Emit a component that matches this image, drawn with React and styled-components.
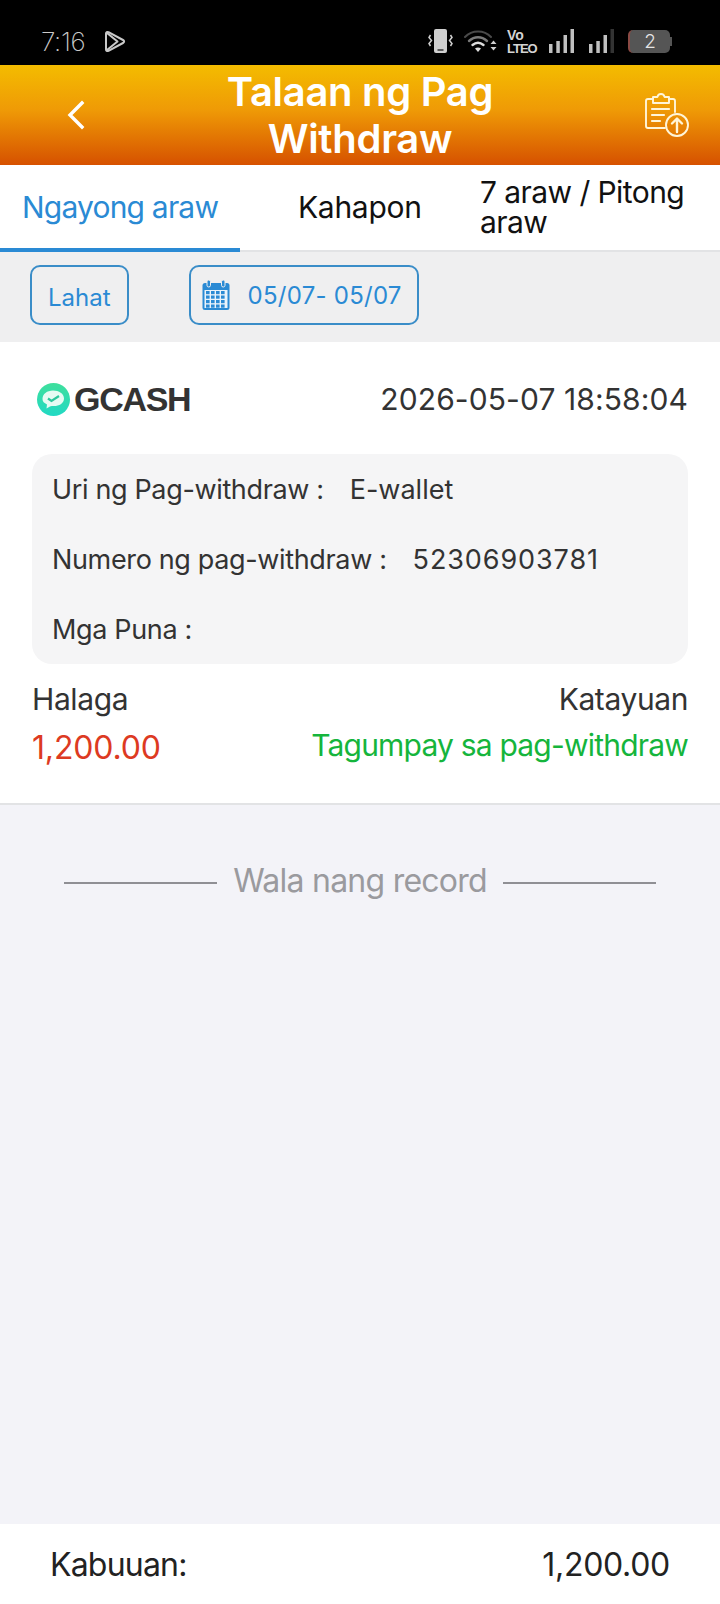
import React from "react";
import styled, { createGlobalStyle } from "styled-components";

const Global = createGlobalStyle`
  html, body { margin: 0; padding: 0; }
  body { font-family: Inter, "Liberation Sans", sans-serif; background: #f3f3f8; }
  * { box-sizing: border-box; }
`;

const Page = styled.div`
  width: 720px;
  height: 1604px;
  display: flex;
  flex-direction: column;
  background: #f3f3f8;
`;

const StatusBar = styled.div`
  height: 65px;
  background: #000;
  display: flex;
  align-items: center;
  padding: 17px 0 0 41px;
  color: #c9c9c9;
`;

const Time = styled.span`
  font-size: 26px;
  font-weight: 200;
  letter-spacing: -0.4px;
  width: 63px;
`;

const StatusIcons = styled.div`
  margin-left: auto;
  display: flex;
  align-items: center;
  margin-right: 48px;
`;

const Slot = styled.span`
  display: flex;
  margin-left: ${(p) => p.$ml}px;
`;

const Volte = styled.div`
  display: flex;
  flex-direction: column;
  align-items: flex-start;
  width: 31px;
  font-family: "Liberation Sans", sans-serif;
  font-weight: 700;
  color: #d4d4d4;
  span:first-child { font-size: 14px; line-height: 14px; }
  span:last-child { font-size: 13px; line-height: 13px; letter-spacing: -1px; }
`;

const Battery = styled.div`
  width: 42px;
  height: 23px;
  margin-left: 14px;
  margin-right: 2px;
  border-radius: 5px;
  border-left: 2px solid #8a4a44;
  background: #555;
  color: #e4e4e4;
  font-size: 19px;
  font-weight: 300;
  display: flex;
  align-items: center;
  justify-content: center;
  position: relative;
  &::after {
    content: "";
    position: absolute;
    right: -2px;
    top: 7px;
    width: 2px;
    height: 9px;
    background: #555;
  }
`;

const Header = styled.header`
  height: 100px;
  background: linear-gradient(180deg, #f4bc00 0%, #ef9a06 45%, #d65100 100%);
  display: flex;
  align-items: center;
`;

const HeaderSide = styled.div`
  width: 210px;
  flex: none;
  display: flex;
  justify-content: ${(p) => (p.$end ? "flex-end" : "flex-start")};
  padding: ${(p) => (p.$end ? "0 30px 0 0" : "0 0 0 65px")};
`;

const Title = styled.h1`
  margin: -1px 0 0;
  width: 300px;
  flex: none;
  text-align: center;
  color: #fff;
  font-size: 40px;
  line-height: 47px;
  font-weight: 600;
  letter-spacing: -0.3px;
`;

const Tabs = styled.nav`
  height: 87px;
  background: #fff;
  display: flex;
  border-bottom: 2px solid #e2e3e5;
`;

const Tab = styled.div`
  width: ${(p) => p.$w}px;
  height: 87px;
  flex: none;
  display: flex;
  align-items: center;
  padding-left: ${(p) => p.$pad}px;
  color: ${(p) => (p.$active ? "#2a8ad4" : "#111")};
  border-bottom: 4px solid ${(p) => (p.$active ? "#2a8ad4" : "transparent")};
  font-size: 30px;
  line-height: 30px;
  font-weight: 400;
  letter-spacing: ${(p) => p.$track}px;
`;

const Filters = styled.div`
  height: 90px;
  background: #efeff0;
  display: flex;
  align-items: flex-start;
  padding: 13px 0 0 30px;
  gap: 60px;
`;

const FilterButton = styled.div`
  height: 60px;
  border: 2px solid #3a8dc8;
  border-radius: 10px;
  display: flex;
  align-items: center;
  color: #2a8ad4;
  font-size: 24px;
  padding: ${(p) => p.$drop}px ${(p) => p.$right}px 0 ${(p) => p.$left}px;
  gap: 18px;
  letter-spacing: ${(p) => p.$track}px;
`;

const Card = styled.section`
  background: #fff;
  height: 463px;
  border-bottom: 2px solid #e2e3e5;
  padding: 0 32px;
`;

const CardHead = styled.div`
  height: 112px;
  padding-top: 2px;
  display: flex;
  align-items: center;
  justify-content: space-between;
`;

const Brand = styled.div`
  display: flex;
  align-items: center;
  gap: 4px;
  padding-left: 5px;
  color: #333;
  font-family: "Liberation Sans", sans-serif;
  font-size: 34px;
  font-weight: 700;
  letter-spacing: -1.3px;
`;

const Stamp = styled.span`
  font-size: 30px;
  font-weight: 400;
  color: #333;
  letter-spacing: 0.1px;
`;

const Details = styled.div`
  background: #f5f5f6;
  border-radius: 20px;
  height: 210px;
  padding: 0 20px;
  display: flex;
  flex-direction: column;
  justify-content: space-around;
`;

const DetailRow = styled.div`
  display: flex;
  color: #333;
  font-size: 27px;
`;

const DetailLabel = styled.span`
  margin-right: ${(p) => p.$gap}px;
  letter-spacing: -0.35px;
`;

const DetailValue = styled.span`
  letter-spacing: ${(p) => p.$track}px;
`;

const Summary = styled.div`
  display: flex;
  justify-content: space-between;
  padding-top: 17px;
`;

const Column = styled.div`
  display: flex;
  flex-direction: column;
  gap: 9px;
  align-items: ${(p) => (p.$end ? "flex-end" : "flex-start")};
`;

const SummaryLabel = styled.span`
  font-size: 30px;
  line-height: 36px;
  color: #333;
  letter-spacing: -0.4px;
`;

const Amount = styled.span`
  margin-top: 3px;
  font-size: 32px;
  line-height: 38px;
  color: #dd3a22;
  letter-spacing: -0.15px;
`;

const StatusText = styled.span`
  font-size: 30px;
  line-height: 38px;
  color: #15b53c;
  letter-spacing: -0.8px;
`;

const End = styled.div`
  flex: 1;
  display: flex;
  align-items: flex-start;
  justify-content: center;
  gap: 16px;
  margin-top: 56px;
  color: #9a9a9e;
  font-size: 32px;
  line-height: 40px;
  letter-spacing: -0.75px;
`;

const Rule = styled.span`
  width: 153px;
  height: 2px;
  background: #8f8f94;
  margin-top: 21px;
`;

const Footer = styled.footer`
  height: 80px;
  background: #fff;
  display: flex;
  align-items: center;
  justify-content: space-between;
  padding: 0 50px;
  color: #222;
  font-size: 32px;
  letter-spacing: -0.3px;
`;

const FooterLabel = styled.span`
  letter-spacing: -0.8px;
`;

const PlayIcon = () => (
  <svg width="22" height="23" viewBox="0 0 22 23" fill="none" stroke="#c9c9c9" strokeWidth="2" strokeLinejoin="round">
    <path d="M2 3.500c0-1.500 1-2 2.500-1.300l14.500 7.800c1.500.800 1.500 2.200 0 3L4.500 20.800C3 21.500 2 21 2 19.500Z" />
    <path d="M3 3l10.500 8.500L3 20" />
  </svg>
);

const VibrateIcon = () => (
  <svg width="25" height="24" viewBox="0 0 25 24" fill="none">
    <rect x="6" y="0" width="13" height="24" rx="2" fill="#cfcfcf" />
    <path d="M9.500 21h6" stroke="#333" strokeWidth="1.500" />
    <path d="M2.500 6 1 8.500l2.500 3-2.500 3 1.500 2.500M22.500 6 24 8.500l-2.500 3 2.500 3-1.500 2.500" stroke="#cfcfcf" strokeWidth="1.500" />
  </svg>
);

const WifiIcon = () => (
  <svg width="33" height="24" viewBox="0 0 33 24" fill="none" strokeLinecap="round">
    <path d="M1 8C8 .5 20 .5 27 8" stroke="#4a4a4a" strokeWidth="2" />
    <path d="M5 12c5.500-5 12.500-5 18 0" stroke="#7a7a7a" strokeWidth="2.400" />
    <path d="M8.500 16c3.500-3 7.500-3 11 0" stroke="#dcdcdc" strokeWidth="2.400" />
    <path d="M11 19.500 14 23l3-3.500c-1.800-1.200-4.200-1.200-6 0Z" fill="#dcdcdc" />
    <path d="M26.500 15l3-3.500 3 3.500ZM26.500 18l3 3.500 3-3.500Z" fill="#cfcfcf" />
  </svg>
);

const SignalIcon = ({ dim }) => (
  <svg width="25" height="24" viewBox="0 0 25 24">
    <rect x="0" y="15" width="3.500" height="9" fill="#c0c0c0" />
    <rect x="7.300" y="12" width="3.500" height="12" fill="#c0c0c0" />
    <rect x="14.500" y="6" width="3.500" height="18" fill="#c0c0c0" />
    <rect x="21.500" y="0" width="3.500" height="24" fill={dim ? "#333" : "#c0c0c0"} />
  </svg>
);

const BackIcon = () => (
  <svg width="22" height="32" viewBox="0 0 22 32" fill="none" stroke="#fff" strokeWidth="3.400" strokeLinecap="square">
    <path d="M17 4 5 16l12 12" />
  </svg>
);

const ClipIcon = () => (
  <svg width="46" height="46" viewBox="0 0 46 46" fill="none" stroke="#fff5d8" strokeWidth="1.900" strokeLinecap="round" strokeLinejoin="round">
    <path d="M21 36H4a2 2 0 0 1-2-2V9a2 2 0 0 1 2-2h5M25 7h4a2 2 0 0 1 2 2v11" />
    <path d="M9 5h4.500c.500-4 6.500-4 7 0H25v6H9Z" />
    <path d="M8 17h17M8 23h12M8 29h8" strokeWidth="2.200" />
    <circle cx="33" cy="33" r="11" />
    <path d="M33 40V27M28 31.500l5-5 5 5" strokeWidth="2.400" />
  </svg>
);

const CalendarIcon = () => (
  <svg width="28" height="30" viewBox="0 0 28 30">
    <rect x="0.500" y="3" width="27" height="27" rx="2.500" fill="#2a8ad4" />
    <rect x="2.500" y="10" width="23" height="18" fill="#eaf3fb" />
    <rect x="5" y="0" width="3.500" height="7" rx="1.700" fill="#2a8ad4" stroke="#efeff0" />
    <rect x="19.500" y="0" width="3.500" height="7" rx="1.700" fill="#2a8ad4" stroke="#efeff0" />
    {[11.500, 16, 20.500, 25].flatMap((y) =>
      [4, 9, 14, 19].map((x) => <rect key={`${x}-${y}`} x={x} y={y - 0.500} width="3.600" height="3.200" fill="#2a8ad4" />)
    )}
  </svg>
);

const GcashIcon = () => (
  <svg width="33" height="33" viewBox="0 0 33 33">
    <defs>
      <linearGradient id="g" x1="0" y1="0" x2="0" y2="1">
        <stop offset="0" stopColor="#3fdf9c" />
        <stop offset="1" stopColor="#21d9c4" />
      </linearGradient>
    </defs>
    <circle cx="16.500" cy="16.500" r="16.500" fill="url(#g)" />
    <path d="M5.500 16c0-5 4.500-8.500 10.500-8.500S27 10.500 27 15.500 22 23 17 23c-1.500 0-3 0-4.500 .800l-3 1.700.500-4C7 20 5.500 18.500 5.500 16Z" fill="#e6fbf3" />
    <path d="M11 15.500l3.500 2.500 7.500-5" fill="none" stroke="#2cc79c" strokeWidth="2.200" />
  </svg>
);

export default function App() {
  return (
    <Page>
      <Global />
      <StatusBar>
        <Time>7:16</Time>
        <PlayIcon />
        <StatusIcons>
          <VibrateIcon />
          <Slot $ml={11}><WifiIcon /></Slot>
          <Slot $ml={10}>
            <Volte>
              <span>Vo</span>
              <span>LTEO</span>
            </Volte>
          </Slot>
          <Slot $ml={11}><SignalIcon /></Slot>
          <Slot $ml={15}><SignalIcon dim /></Slot>
          <Battery>2</Battery>
        </StatusIcons>
      </StatusBar>
      <Header>
        <HeaderSide><BackIcon /></HeaderSide>
        <Title>Talaan ng Pag Withdraw</Title>
        <HeaderSide $end><ClipIcon /></HeaderSide>
      </Header>
      <Tabs>
        <Tab $w={240} $pad={22} $track={-0.8} $active>Ngayong araw</Tab>
        <Tab $w={240} $pad={58} $track={-0.3}>Kahapon</Tab>
        <Tab $w={240} $pad={0} $track={-0.57}>7 araw / Pitong araw</Tab>
      </Tabs>
      <Filters>
        <FilterButton $left={16} $right={16} $drop={5} $track={0}>Lahat</FilterButton>
        <FilterButton $left={11} $right={15} $drop={0} $track={0.25}>
          <CalendarIcon />
          05/07- 05/07
        </FilterButton>
      </Filters>
      <Card>
        <CardHead>
          <Brand>
            <GcashIcon />
            GCASH
          </Brand>
          <Stamp>2026-05-07 18:58:04</Stamp>
        </CardHead>
        <Details>
          <DetailRow>
            <DetailLabel $gap={26}>Uri ng Pag-withdraw :</DetailLabel>
            <DetailValue $track={0}>E-wallet</DetailValue>
          </DetailRow>
          <DetailRow>
            <DetailLabel $gap={26}>Numero ng pag-withdraw :</DetailLabel>
            <DetailValue $track={0.9}>52306903781</DetailValue>
          </DetailRow>
          <DetailRow>
            <DetailLabel $gap={0}>Mga Puna :</DetailLabel>
          </DetailRow>
        </Details>
        <Summary>
          <Column>
            <SummaryLabel>Halaga</SummaryLabel>
            <Amount>1,200.00</Amount>
          </Column>
          <Column $end>
            <SummaryLabel>Katayuan</SummaryLabel>
            <StatusText>Tagumpay sa pag-withdraw</StatusText>
          </Column>
        </Summary>
      </Card>
      <End>
        <Rule />
        Wala nang record
        <Rule />
      </End>
      <Footer>
        <FooterLabel>Kabuuan:</FooterLabel>
        <span>1,200.00</span>
      </Footer>
    </Page>
  );
}
